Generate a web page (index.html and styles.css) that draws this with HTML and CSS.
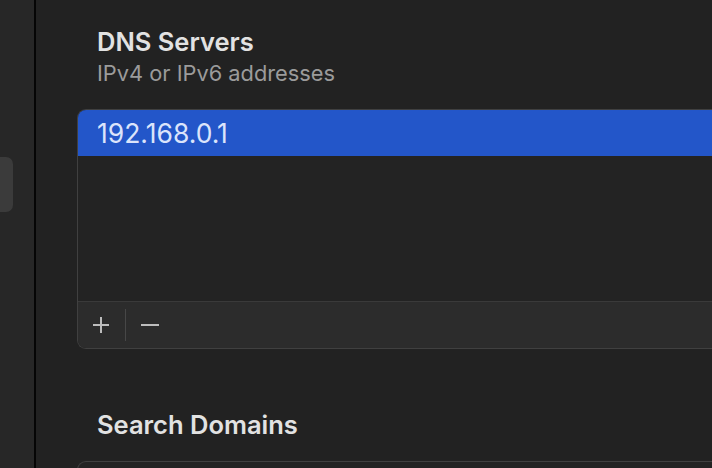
FILE: index.html
```html
<!DOCTYPE html>
<html>
<head>
<meta charset="utf-8">
<link rel="stylesheet" href="styles.css">
</head>
<body>
<div class="sidebar">
  <div class="side-item"></div>
</div>
<div class="main">
  <section class="group">
    <h2 class="title">DNS Servers</h2>
    <p class="subtitle">IPv4 or IPv6 addresses</p>
    <div class="listbox">
      <div class="list">
        <div class="row selected">192.168.0.1</div>
      </div>
      <div class="toolbar">
        <button class="tool" aria-label="Add">
          <svg width="18" height="18" viewBox="0 0 18 18"><path d="M9 1v16M1 9h16" stroke="#bdbdbd" stroke-width="2" fill="none"/></svg>
        </button>
        <span class="tool-sep"></span>
        <button class="tool" aria-label="Remove">
          <svg width="18" height="18" viewBox="0 0 18 18"><path d="M0 9h18" stroke="#bdbdbd" stroke-width="2" fill="none"/></svg>
        </button>
      </div>
    </div>
  </section>
  <section class="group second">
    <h2 class="title">Search Domains</h2>
    <div class="listbox short"></div>
  </section>
</div>
</body>
</html>
```
FILE: styles.css
```css
html, body {
  margin: 0;
  padding: 0;
  height: 468px;
  overflow: hidden;
  background: #222222;
  font-family: Inter, "Noto Sans", sans-serif;
}
body {
  display: flex;
}
.sidebar {
  width: 34px;
  flex: none;
  background: #272727;
  border-right: 2px solid #050505;
  padding-top: 157px;
}
.side-item {
  width: 20px;
  height: 55px;
  margin-left: -7px;
  border-radius: 7px;
  background: #3b3b3b;
}
.main {
  flex: 1;
  height: 468px;
  overflow: hidden;
  padding-left: 41px;
  padding-top: 27px;
  min-width: 0;
  box-sizing: border-box;
}
.title {
  margin: 0;
  padding-left: 20px;
  font-size: 25.5px;
  line-height: 30px;
  font-weight: 600;
  color: #e2e2e2;
}
.subtitle {
  margin: 3px 0 0 0;
  padding-left: 20px;
  font-size: 21.8px;
  line-height: 26px;
  color: #9b9b9b;
}
.listbox {
  margin-top: 23px;
  border: 1px solid #404040;
  border-right: none;
  border-radius: 9px 0 0 9px;
  background: #232323;
  overflow: hidden;
}
.list {
  height: 191px;
}
.row {
  height: 46px;
  line-height: 46px;
  padding-left: 19px;
  font-size: 26.5px;
  color: #dbe4fb;
}
.row.selected {
  background: #2356c9;
}
.toolbar {
  height: 46px;
  border-top: 1px solid #3a3a3a;
  background: #2c2c2c;
  display: flex;
  align-items: center;
  padding-left: 14px;
}
.tool {
  background: none;
  border: none;
  padding: 0;
  width: 18px;
  height: 18px;
  display: flex;
}
.tool-sep {
  width: 1px;
  height: 32px;
  background: #474747;
  margin: 0 15px 0 15px;
}
.second {
  margin-top: 61px;
}
.listbox.short {
  height: 40px;
  margin-top: 21px;
}
```
